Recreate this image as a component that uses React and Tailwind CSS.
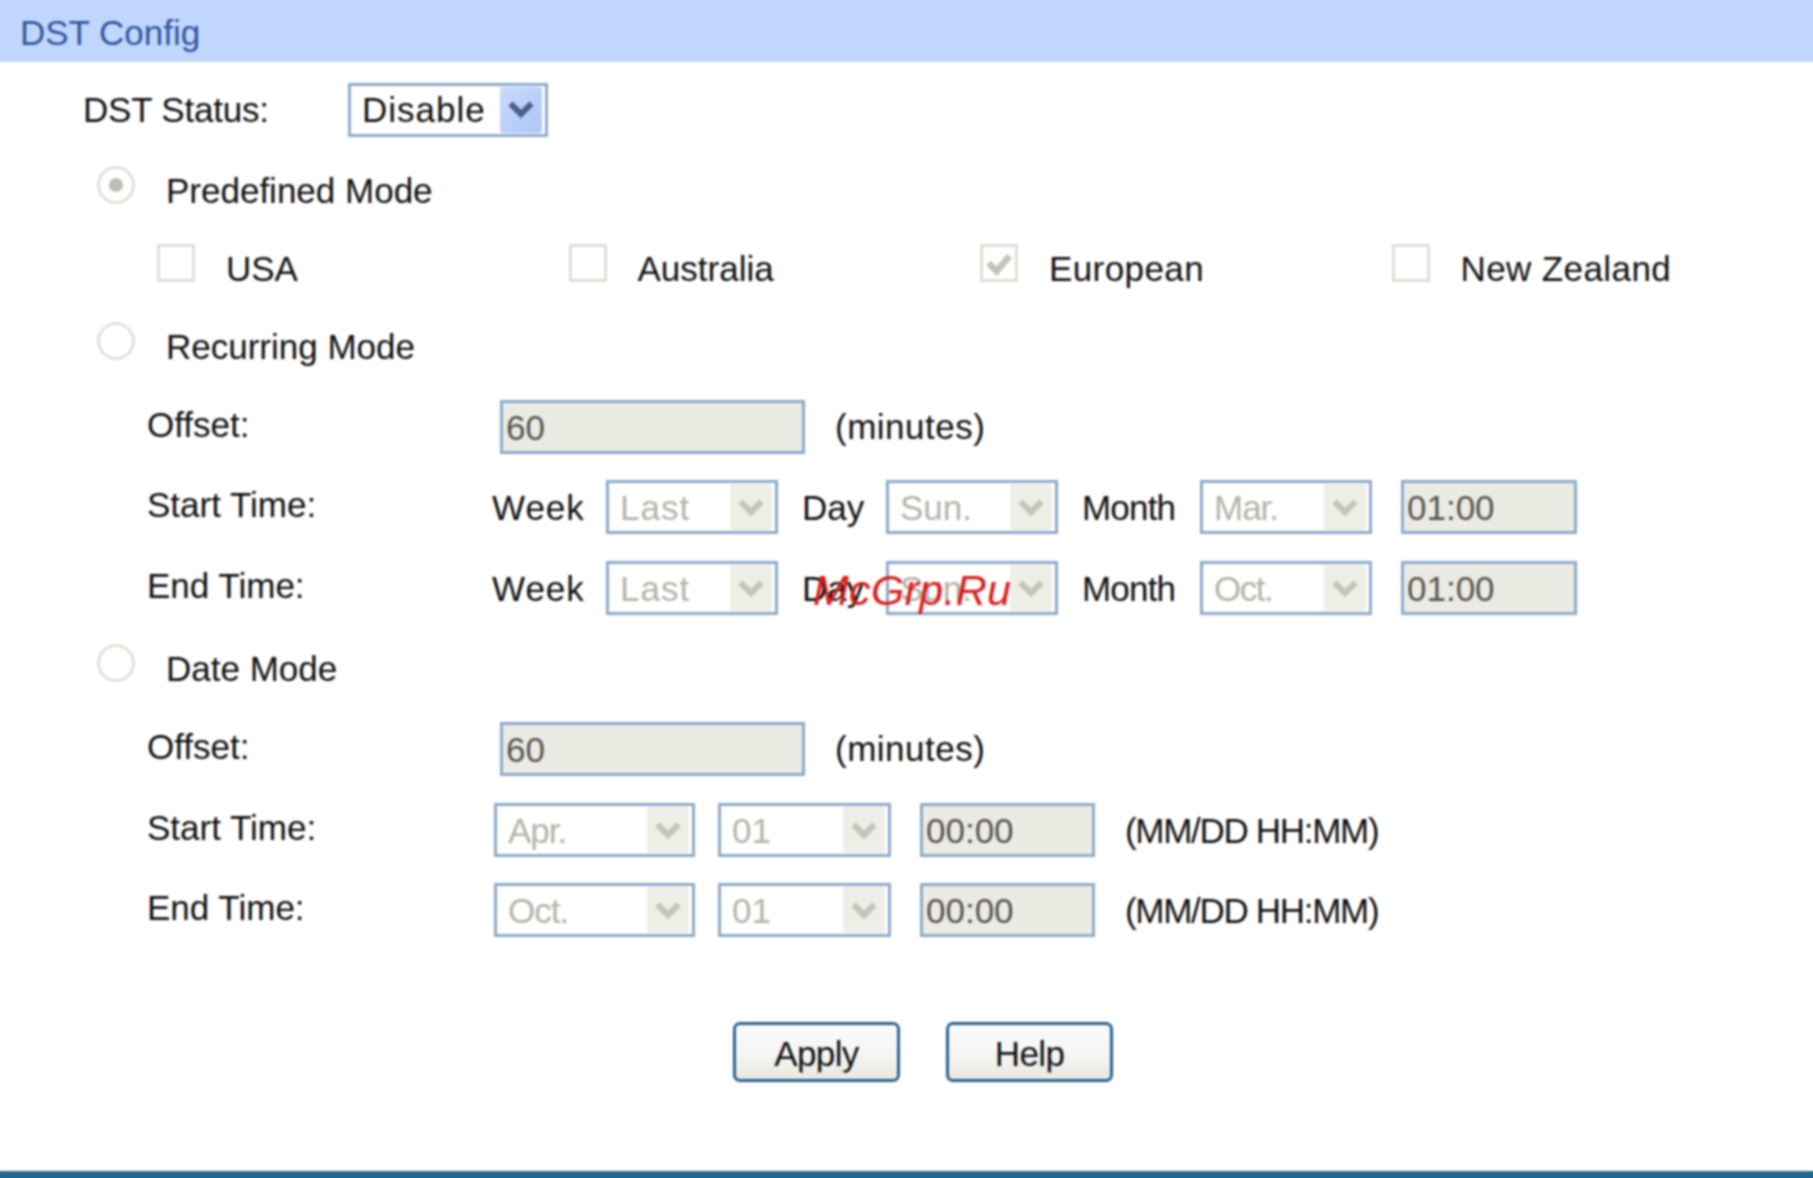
function Chevron({ disabled }) {
  return (
    <svg viewBox="0 0 24 16" className="w-[28px] h-[19px]">
      <polyline
        points="3,3 12,12 21,3"
        fill="none"
        stroke={disabled ? "#c4c3b8" : "#4c5f86"}
        strokeWidth="5"
      />
    </svg>
  );
}

function Select({ value, width, disabled = true, tracking = "tracking-normal" }) {
  return (
    <div
      className={`flex items-center justify-between h-[54px] border-[3px] border-[#8dabca] bg-white pl-[11px] pr-[3px] ${width} ${
        disabled ? "text-[#b5b3a8]" : "text-[#111]"
      }`}
    >
      <span className={`pt-[2px] ${tracking}`}>{value}</span>
      <span
        className={`flex items-center justify-center w-[42px] h-[46px] rounded-[3px] ${
          disabled ? "bg-[#eeede6]" : "bg-gradient-to-br from-[#c9d9fb] to-[#adc6f8]"
        }`}
      >
        <Chevron disabled={disabled} />
      </span>
    </div>
  );
}

function TextBox({ value, width }) {
  return (
    <div
      className={`flex items-center h-[54px] border-[3px] border-[#8dabca] bg-[#ebeae3] pl-[3px] pt-[2px] text-[#55554f] ${width}`}
    >
      {value}
    </div>
  );
}

function Radio({ checked }) {
  return (
    <span className="flex items-center justify-center w-[38px] h-[38px] mb-[12px] rounded-full border-[3px] border-[#e2e2da] bg-white">
      {checked && <span className="w-[14px] h-[14px] rounded-full bg-[#bdbdb4]" />}
    </span>
  );
}

function Check({ label, checked, tracking = "tracking-normal" }) {
  return (
    <div className="flex items-center w-[411.5px]">
      <span className="flex items-center justify-center w-[38px] h-[38px] mb-[10px] border-[3px] border-[#dfded5] bg-white">
        {checked && (
          <svg viewBox="0 0 24 24" className="w-[28px] h-[28px]">
            <polyline points="3,12 10,19 21,6" fill="none" stroke="#c4c3b8" strokeWidth="5.5" />
          </svg>
        )}
      </span>
      <span className={`ml-[31px] pt-[2px] ${tracking}`}>{label}</span>
    </div>
  );
}

function ModeRow({ label, checked, className }) {
  return (
    <div className={`flex items-center h-[54px] pl-[97px] ${className}`}>
      <Radio checked={checked} />
      <span className="ml-[31px] pt-[1px]">{label}</span>
    </div>
  );
}

function FieldRow({ label, className, children }) {
  return (
    <div className={`flex items-center h-[54px] pl-[147px] ${className}`}>
      <span className="w-[345px] pb-[4px]">{label}</span>
      {children}
    </div>
  );
}

function WeekRow({ label, month, monthTracking, className }) {
  return (
    <FieldRow label={label} className={className}>
      <span className="w-[114px] pt-[2px] tracking-[1px]">Week</span>
      <Select value="Last" width="w-[172px]" tracking="tracking-[1px]" />
      <span className="w-[108px] pl-[24px] pt-[2px]">Day</span>
      <Select value="Sun." width="w-[172px]" />
      <span className="w-[142px] pl-[24px] pt-[2px] tracking-[-0.8px]">Month</span>
      <Select value={month} width="w-[172px]" tracking={monthTracking} />
      <div className="ml-[29px]">
        <TextBox value="01:00" width="w-[176px]" />
      </div>
    </FieldRow>
  );
}

function OffsetRow({ className }) {
  return (
    <FieldRow label="Offset:" className={className}>
      <div className="ml-[8px]">
        <TextBox value="60" width="w-[305px]" />
      </div>
      <span className="ml-[30px] tracking-[0.5px]">(minutes)</span>
    </FieldRow>
  );
}

function DateRow({ label, month, className }) {
  return (
    <FieldRow label={label} className={className}>
      <div className="ml-[2px]">
        <Select value={month} width="w-[201px]" tracking="tracking-[-1px]" />
      </div>
      <div className="ml-[23px]">
        <Select value="01" width="w-[173px]" />
      </div>
      <div className="ml-[29px]">
        <TextBox value="00:00" width="w-[175px]" />
      </div>
      <span className="ml-[30px] pt-[2px] tracking-[-1.3px]">(MM/DD HH:MM)</span>
    </FieldRow>
  );
}

function Btn({ children }) {
  return (
    <button className="relative w-[167px] h-[60px] pt-[3px] rounded-[7px] border-[3px] border-[#2a6290] bg-gradient-to-b from-[#fafafa] via-[#f6f6f6] to-[#e9e9e2] text-[#111] tracking-[-0.6px]">
      {children}
      <span className="absolute left-[4px] right-[4px] bottom-[5px] border-t-2 border-dotted border-[#f1e8bf]" />
    </button>
  );
}

export default function App() {
  return (
    <div className="relative h-[1178px] w-[1813px] overflow-hidden bg-white text-[35px] text-[#111] font-['Liberation_Sans',Arial,sans-serif]">
      <div className="flex items-center h-[62px] pl-[20px] pt-[5px] bg-[#c1d6fd] text-[#2f55a0]">DST Config</div>

      <div className="flex items-center h-[55px] mt-[20px] pl-[83px]">
        <span className="w-[265px] pt-[2px] tracking-[-0.2px]">DST Status:</span>
        <Select value="Disable" width="w-[200px]" disabled={false} tracking="tracking-[1px]" />
      </div>

      <ModeRow label="Predefined Mode" checked className="mt-[27px]" />
      <div className="flex h-[54px] mt-[23px] pl-[157px]">
        <Check label="USA" />
        <Check label="Australia" />
        <Check label="European" checked tracking="tracking-[0.4px]" />
        <Check label="New Zealand" tracking="tracking-[0.4px]" />
      </div>

      <ModeRow label="Recurring Mode" className="mt-[25px]" />
      <OffsetRow className="mt-[26px]" />
      <WeekRow label="Start Time:" month="Mar." monthTracking="tracking-[-1px]" className="mt-[26px]" />
      <WeekRow label="End Time:" month="Oct." monthTracking="tracking-[-1.5px]" className="mt-[27px]" />

      <ModeRow label="Date Mode" className="mt-[27px]" />
      <OffsetRow className="mt-[26px]" />
      <DateRow label="Start Time:" month="Apr." className="mt-[27px]" />
      <DateRow label="End Time:" month="Oct." className="mt-[26px]" />

      <div className="flex gap-[46px] mt-[85px] pl-[733px]">
        <Btn>Apply</Btn>
        <Btn>Help</Btn>
      </div>

      <div className="absolute bottom-0 left-0 right-0 h-[7px] bg-[#236690]" />

      {/* watermark over the page */}
      <span className="absolute left-[813px] top-[558px] text-[43px] italic tracking-[0.3px] text-[#d81e1e]">McGrp.Ru</span>

      {/* the reference is a soft upscale, so everything gets a slight blur */}
      <div className="absolute inset-0 backdrop-blur-[0.8px]" />
    </div>
  );
}
